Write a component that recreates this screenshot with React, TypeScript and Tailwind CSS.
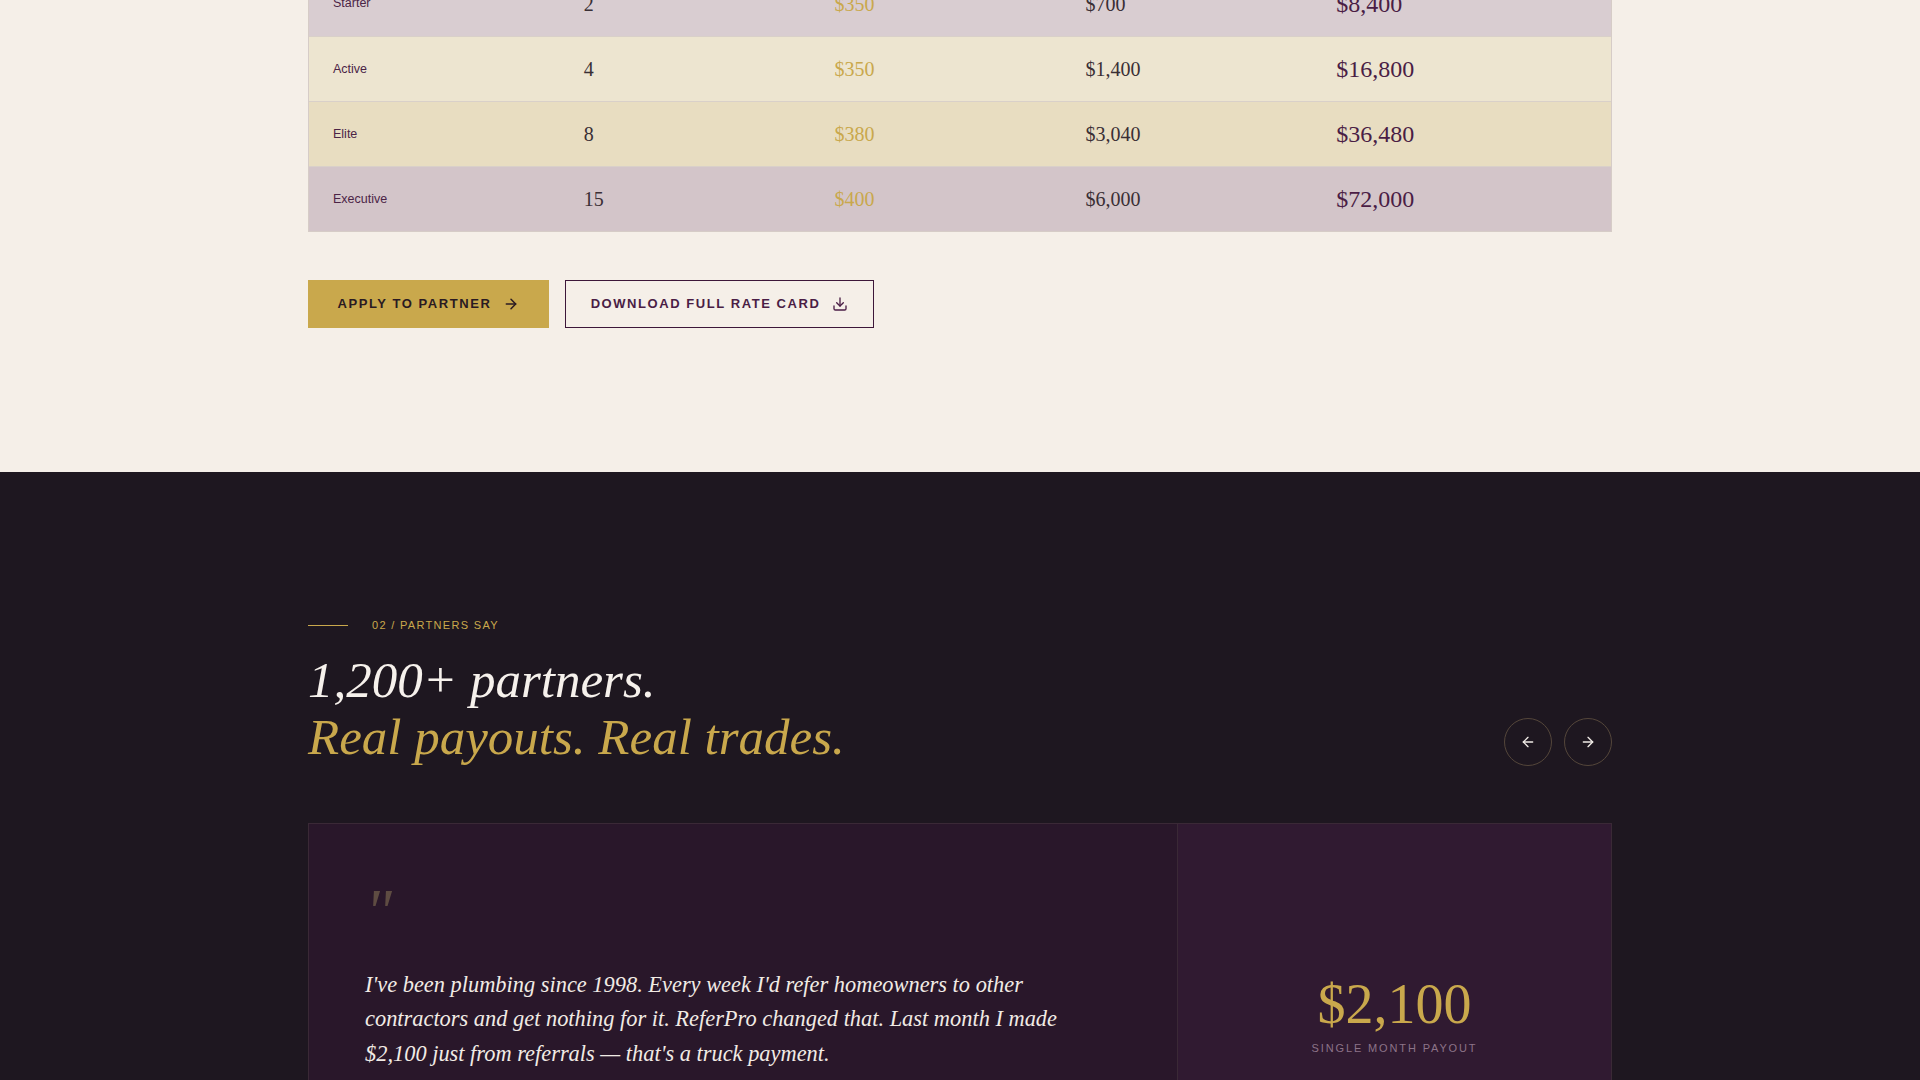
import React from "react";
import { ArrowLeft, ArrowRight, Download } from "lucide-react";

const tiers = [
  { name: "Starter", refs: "2", rate: "$350", monthly: "$700", yearly: "$8,400", bg: "bg-[#d9cdd1]" },
  { name: "Active", refs: "4", rate: "$350", monthly: "$1,400", yearly: "$16,800", bg: "bg-[#ede5d0]" },
  { name: "Elite", refs: "8", rate: "$380", monthly: "$3,040", yearly: "$36,480", bg: "bg-[#e8ddc1]" },
  { name: "Executive", refs: "15", rate: "$400", monthly: "$6,000", yearly: "$72,000", bg: "bg-[#d3c5c9]" },
];

const serif = "font-['Liberation_Serif','Times_New_Roman',serif]";
const sans = "font-['Liberation_Sans',Arial,sans-serif]";

const RateTable = () => (
  <div className="border-x border-b border-[#d6ccc7]">
    {tiers.map((t) => (
      <div
        key={t.name}
        className={`grid h-[65px] grid-cols-5 items-center border-t border-[#d9d0c9] px-6 first:border-t-0 ${t.bg}`}
      >
        <span className={`${sans} text-[12.5px] text-[#4b2446]`}>{t.name}</span>
        <span className={`${serif} text-[20px] text-[#3a2f35]`}>{t.refs}</span>
        <span className={`${serif} text-[20px] text-[#c9a84c]`}>{t.rate}</span>
        <span className={`${serif} text-[20px] text-[#3a2f35]`}>{t.monthly}</span>
        <span className={`${serif} text-[24px] text-[#4a1d45]`}>{t.yearly}</span>
      </div>
    ))}
  </div>
);

const RatesSection = () => (
  <section className="bg-[#f5efe8] pb-[144px]">
    <div className="mx-auto -mt-[29px] w-[1304px]">
      <RateTable />
      <div className="mt-12 flex gap-4">
        <button
          className={`${sans} flex h-12 w-[241px] items-center justify-center gap-3 bg-[#c9a84c] text-[13px] font-bold tracking-[0.12em] text-[#2a1a22]`}
        >
          APPLY TO PARTNER
          <ArrowRight className="h-4 w-4" strokeWidth={2.25} />
        </button>
        <button
          className={`${sans} flex h-12 w-[309px] items-center justify-center gap-3 border border-[#3d1739] text-[13px] font-bold tracking-[0.12em] text-[#4a1d45]`}
        >
          DOWNLOAD FULL RATE CARD
          <Download className="h-4 w-4" strokeWidth={2} />
        </button>
      </div>
    </div>
  </section>
);

const Testimonials = () => (
  <section className="bg-[#1e1720] pt-[145px] pb-24">
    <div className="mx-auto w-[1304px]">
      <div className="flex items-center gap-6">
        <span className="h-px w-10 bg-[#c9a84c]" />
        <span className={`${sans} text-[11px] tracking-[0.12em] text-[#c9a84c]`}>02 / PARTNERS SAY</span>
      </div>

      <div className="mt-[18px] flex items-end justify-between">
        <h2 className={`${serif} text-[51px] italic leading-[57px]`}>
          <span className="block text-[#f6f1ec]">1,200+ partners.</span>
          <span className="block text-[#c9a84c]">Real payouts. Real trades.</span>
        </h2>
        <div className="flex gap-3">
          <button className="flex h-12 w-12 items-center justify-center rounded-full border border-[#54463a] text-[#f1ece6]">
            <ArrowLeft className="h-4 w-4" strokeWidth={2} />
          </button>
          <button className="flex h-12 w-12 items-center justify-center rounded-full border border-[#54463a] text-[#f1ece6]">
            <ArrowRight className="h-4 w-4" strokeWidth={2} />
          </button>
        </div>
      </div>

      <div className="mt-[57px] grid grid-cols-3 border border-[#3a2936]">
        <div className="col-span-2 bg-[#29172a] px-14 pt-[56px] pb-14">
          <div className={`${serif} h-[58px] text-[64px] italic leading-none text-[#5e4c42]`}>"</div>
          <p className={`${serif} mt-[30px] max-w-[730px] text-[22.4px] italic leading-[34.5px] text-[#f1ebe5]`}>
            I've been plumbing since 1998. Every week I'd refer homeowners to other contractors and get nothing
            for it. ReferPro changed that. Last month I made $2,100 just from referrals — that's a truck payment.
          </p>
          <div className="mt-10 flex items-center gap-4">
            <div className={`${serif} flex h-12 w-12 items-center justify-center rounded-full bg-[#c9a84c] text-[18px] text-[#29172a]`}>
              MR
            </div>
            <div>
              <div className={`${sans} text-[14px] font-bold text-[#f1ebe5]`}>Mike R.</div>
              <div className={`${sans} text-[12px] tracking-[0.12em] text-[#8c7388]`}>PLUMBER · PHOENIX, AZ</div>
            </div>
          </div>
        </div>
        <div className="flex flex-col items-center border-l border-[#3a2936] bg-[#301a31] pt-[152px]">
          <div className={`${serif} text-[56px] leading-none text-[#c9a84c]`}>$2,100</div>
          <div className={`${sans} mt-2 text-[11px] tracking-[0.17em] text-[#8c7388]`}>SINGLE MONTH PAYOUT</div>
        </div>
      </div>
    </div>
  </section>
);

export default function App() {
  return (
    <div className="min-h-screen overflow-hidden bg-[#1e1720]">
      <RatesSection />
      <Testimonials />
    </div>
  );
}
